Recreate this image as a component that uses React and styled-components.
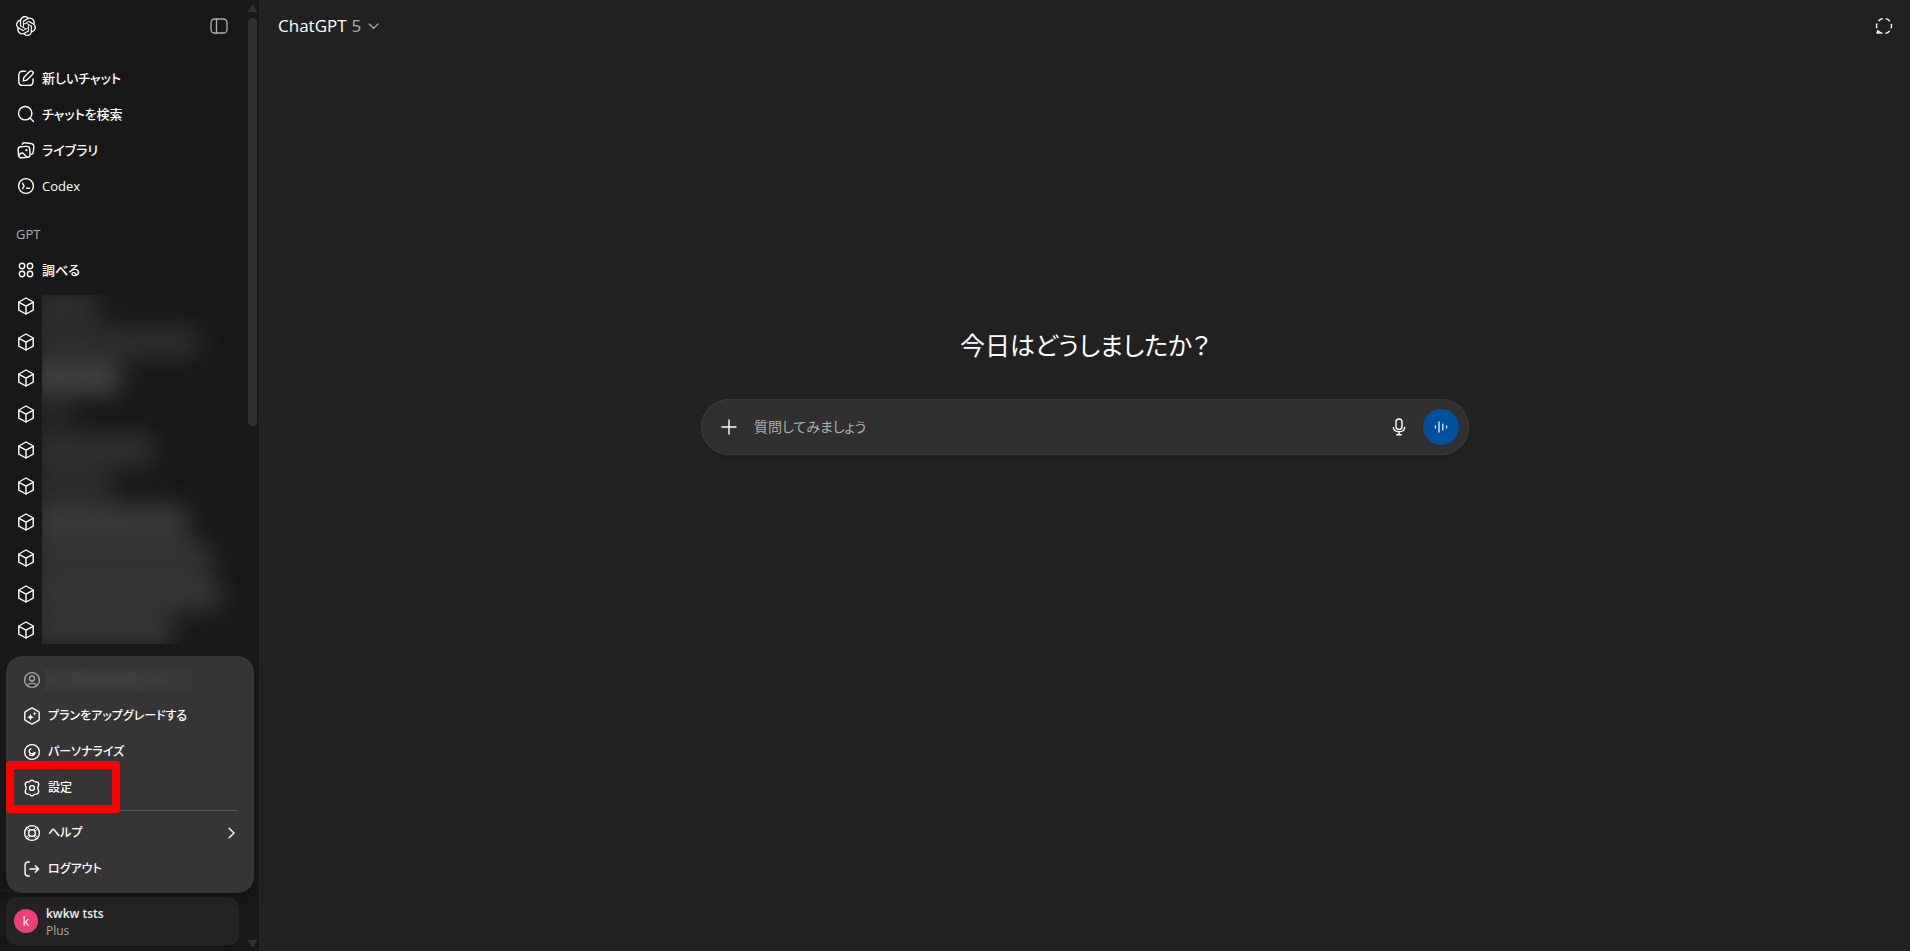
import React from 'react';
import styled, {createGlobalStyle} from 'styled-components';
import {SiOpenai} from 'react-icons/si';



const GlobalStyle = createGlobalStyle`
    * {
        box-sizing: border-box;
    }
    body {
        margin: 0;
        background: #212121;
        color: #fff;
        font-family: "Open Sans", "Noto Sans CJK JP", sans-serif;
        font-feature-settings: "palt";
        font-size: 13px;
    }
    button, input {
        font: inherit;
        font-feature-settings: inherit;
        color: inherit;
    }
    button {
        padding: 0;
        border: 0;
        background: none;
        cursor: pointer;
    }
`
const Page = styled.div`
    display: flex;
    height: 100vh;
`
const Sidebar = styled.aside`
    display: flex;
    flex: none;
    width: 260px;
    background: #181818;
    border-right: 1px solid #252525;
`
const Body = styled.div`
    display: flex;
    flex-direction: column;
    flex: 1;
    min-width: 0;
`
const SideHead = styled.div`
    display: flex;
    flex: none;
    align-items: center;
    justify-content: space-between;
    height: 52px;
    padding: 0 8px 0 16px;
    margin-bottom: 8px;
`
const IconButton = styled.button`
    display: flex;
    flex: none;
    align-items: center;
    justify-content: center;
    width: 36px;
    height: 36px;
    border-radius: 50%;
    color: ${p => p.$color || '#fff'};
    background: ${p => p.$bg || 'none'};
`
const Scrollable = styled.div`
    flex: 1;
    min-height: 0;
    overflow: hidden;
`
const Row = styled.button`
    position: relative;
    display: flex;
    align-items: center;
    gap: 6px;
    width: 100%;
    height: 36px;
    padding: 0 10px;
    border-radius: 10px;
    text-align: left;
    font-weight: 500;
    white-space: nowrap;
    color: ${p => p.$muted ? '#a5a5a5' : '#fff'};
    & > svg {
        flex: none;
    }
`
const Text = styled.span`
    display: block;
    height: 20px;
    line-height: 20px;
`
const Nav = styled.nav`
    padding: 0 6px;
`
const Label = styled.h2`
    margin: 12px 0 0;
    padding-left: 10px;
    line-height: 36px;
    font-size: 13px;
    font-weight: 400;
    color: #afafaf;
`
const GptList = styled.div`
    display: grid;
    grid-template-columns: 36px 1fr;
`
const Hidden = styled.div`
    height: 349px;
    margin-top: 7px;
    overflow: hidden;
`
const Smudges = styled.div`
    margin: -7px 0 0 -10px;
    filter: blur(12px);
`
const Smudge = styled.div`
    height: 36px;
    border-top: 2px solid transparent;
    border-bottom: 2px solid transparent;
    background: ${p => p.$color};
    background-clip: padding-box;
`
const Footer = styled.div`
    position: relative;
    flex: none;
    padding: 6px;
    border-top: 1px solid #222;
`
const Account = styled.button`
    display: flex;
    align-items: center;
    gap: 8px;
    width: 100%;
    height: 48px;
    padding: 0 8px;
    border-radius: 10px;
    background: #242424;
    text-align: left;
`
const Avatar = styled.span`
    width: 24px;
    height: 24px;
    border-radius: 50%;
    background: #ec407a;
    line-height: 24px;
    text-align: center;
`
const Name = styled.span`
    display: block;
    padding-top: 2px;
    line-height: 18px;
    font-size: 12px;
    font-weight: 600;
    color: #f0f0f0;
`
const Plan = styled.span`
    display: block;
    line-height: 16px;
    font-size: 12px;
    color: #a5a5a5;
`
const Menu = styled.div`
    position: absolute;
    left: 6px;
    bottom: 58px;
    z-index: 2;
    width: 248px;
    padding: 6px;
    border-radius: 16px;
    background: #353535;
    box-shadow: 0 8px 12px rgba(0, 0, 0, 0.16), 0 0 1px rgba(0, 0, 0, 0.6);
    font-size: 12px;
`
const Blurred = styled.span`
    width: 146px;
    height: 24px;
    margin-left: -3px;
    background: radial-gradient(ellipse at 40% 50%, #404040, #383838 80%);
`
const Divider = styled.hr`
    height: 1px;
    margin: 4px 10px;
    border: 0;
    background: #555;
`
const Push = styled.span`
    display: flex;
    margin-left: auto;
`
const Highlight = styled.span`
    position: absolute;
    top: -9px;
    left: -6px;
    width: 114px;
    height: 52px;
    border: 8px solid #f00;
    border-radius: 3px;
`
const Scrollbar = styled.div`
    display: flex;
    flex-direction: column;
    flex: none;
    width: 14px;
    padding: 4px 2px 3px 3px;
    color: #303030;
    & > svg {
        flex: none;
    }
`
const Track = styled.div`
    flex: 1;
    margin: 5px 0;
`
const Thumb = styled.div`
    height: 44.5%;
    border-radius: 5px;
    background: #303030;
`
const Main = styled.main`
    display: flex;
    flex-direction: column;
    flex: 1;
    min-width: 0;
`
const TopBar = styled.header`
    display: flex;
    align-items: center;
    justify-content: space-between;
    height: 52px;
    padding: 0 8px 0 18px;
`
const Model = styled.button`
    display: flex;
    align-items: center;
    gap: 5px;
    font-size: 17px;
    line-height: 28px;
    & > span, & > svg {
        color: #afafaf;
    }
`
const Center = styled.div`
    display: flex;
    flex-direction: column;
    align-items: center;
    gap: 36px;
    padding: 275px 24px 0;
`
const Title = styled.h1`
    margin: 0;
    line-height: 36px;
    font-size: 25px;
    font-weight: 400;
`
const Composer = styled.form`
    display: flex;
    align-items: center;
    gap: 6px;
    width: 100%;
    max-width: 768px;
    height: 56px;
    padding: 0 10px;
    border-radius: 28px;
    background: #303030;
    box-shadow: inset 0 0 1px rgba(255, 255, 255, 0.3), 0 4px 4px rgba(0, 0, 0, 0.06);
`
const Question = styled.input`
    flex: 1;
    min-width: 0;
    padding: 0 1px;
    border: 0;
    outline: 0;
    background: none;
    font-size: 14px;
    line-height: 24px;
    &::placeholder {
        color: #afafaf;
        opacity: 1;
    }
`

const Icon = ({children, size = 20, width = 1.4}) => (
    <svg width={size} height={size} viewBox="0 0 20 20" fill="none" stroke="currentColor"
        strokeWidth={width} strokeLinecap="round" strokeLinejoin="round" aria-hidden="true">
        {children}
    </svg>
)

const icons = {
    panel: <><rect x="2" y="3" width="16" height="14" rx="3.5"/><path d="M7.5 3v14"/></>,
    edit: <>
        <path d="M9.500 3.200H6.800C4.100 3.200 2.800 4.500 2.800 7.200v6.200c0 2.700 1.300 4 4 4h6.200c2.700 0 4-1.300 4-4V11"/>
        <path d="M7.300 12.800l.4-2.700c.1-.5.3-.9.6-1.200l5.300-5.300a1.950 1.950 0 0 1 2.900 2.900l-5.300 5.300c-.3.300-.7.500-1.200.6z"/>
    </>,
    search: <><circle cx="9.200" cy="9.200" r="6.700"/><path d="M14 14l3.500 3.500"/></>,
    library: <>
        <rect x="2.300" y="6.600" width="11.600" height="11" rx="2.800" transform="rotate(-4 8 12)"/>
        <path d="M6.300 4.200c.3-1 1.100-1.500 2.200-1.400l6.300.7c2.200.3 3.200 1.500 3 3.600l-.5 4.700c-.2 1.300-.8 2.100-1.900 2.500"/>
        <path d="M3 15.300c1.500-2.800 3.500-2.900 5.200-1.100 1 1.100 1.800 2.100 3 2.900"/>
        <circle cx="10.400" cy="10.200" r="1.100" fill="currentColor" stroke="none"/>
    </>,
    codex: <><circle cx="10" cy="10" r="7.400"/><path d="M6.700 7.300c.3 1.400.8 2.100 1.500 2.700-.7.600-1.200 1.300-1.500 2.700M10.600 12.200h3"/></>,
    explore: <>
        <circle cx="6" cy="6" r="2.700"/><circle cx="14" cy="6" r="2.700"/>
        <circle cx="6" cy="14" r="2.700"/><circle cx="14" cy="14" r="2.700"/>
    </>,
    cube: <>
        <path d="M10 2l7.200 4v8.200L10 18l-7.200-3.800V6z"/>
        <path d="M3 6.300l7 3.900 7-3.900M10 10.200V18"/>
    </>,
    user: <><circle cx="10" cy="10" r="7.400"/><circle cx="10" cy="8.500" r="2.500"/><path d="M5.200 15.400c2.400-3 7.200-3 9.600 0"/></>,
    upgrade: <>
        <path d="M9.100 2.300q.9-.5 1.800 0l5.400 3q.9.500.9 1.500v6.400q0 1-.9 1.500l-5.400 3q-.9.500-1.800 0l-5.400-3q-.9-.5-.9-1.500V6.800q0-1 .9-1.500z"/>
        <path d="M8.500 7.600c.5 2.500 1 3.100 3.600 3.600-2.600.5-3.100 1.100-3.600 3.600-.5-2.500-1-3.100-3.600-3.600 2.600-.5 3.100-1.100 3.600-3.600zM12.600 5.300c.3 1.600.7 2 2.200 2.300-1.500.3-1.900.7-2.200 2.300-.3-1.600-.7-2-2.200-2.300 1.500-.3 1.900-.7 2.200-2.300z" fill="currentColor" stroke="none"/>
    </>,
    personalize: <><circle cx="10" cy="10" r="7.400"/><path d="M8.900 6.800c-2 .8-2.300 3-.8 4.300M7.500 12.800c2.500 1.600 5.200.2 5.500-2.400-1.500 1.500-3.300 1.700-4.900.7"/></>,
    settings: <>
        <path d="M8.700 2.700c.8-.5 1.800-.5 2.600 0l1 .8c.4.300.8.400 1.300.4l1.100.1c1 .1 1.700.7 2 1.600.2.600.1 1.300-.2 1.900l-.5 1.200c-.2.800-.2 1.800 0 2.600l.5 1.200c.6 1.700-.2 3.300-1.900 3.500l-1.100.1c-.5 0-.9.100-1.300.4l-1 .8c-.8.500-1.700.5-2.500 0l-1-.8c-.4-.3-.8-.4-1.300-.4l-1.100-.1c-1.700-.2-2.500-1.800-1.900-3.500l.5-1.200c.2-.8.2-1.800 0-2.600l-.5-1.200C2.800 5.800 3.600 4.200 5.300 4l1.100-.1c.5 0 .9-.1 1.300-.4z"/>
        <circle cx="10" cy="10" r="2.400"/>
    </>,
    help: <>
        <circle cx="10" cy="10" r="7.400"/><circle cx="10" cy="10" r="3.300"/>
        <path d="M5.300 3.900l2.800 3M3.900 5.300l3 2.800M14.700 3.900l-2.800 3M16.100 5.300l-3 2.800M5.300 16.100l2.800-3M3.900 14.700l3-2.800M14.700 16.100l-2.800-3M16.100 14.700l-3-2.800" strokeWidth="1"/>
    </>,
    logout: <><path d="M7.300 3H6.200C4.200 3 3.100 4.100 3.100 6.100v7.800c0 2 1.100 3.100 3.100 3.100h1.100M7.800 10h8.800M13.300 6.700l3.300 3.300-3.300 3.300"/></>,
    right: <path d="M9 4l6 6-6 6"/>,
    down: <path d="M4 7.500l5.500 5.500L15 7.500"/>,
    temp: <>
        <circle cx="10" cy="10" r="7.500" strokeDasharray="4.850 3" strokeDashoffset="2.420" strokeLinecap="butt"/>
        <path d="M4 14.600l-1 2.500 3.800-.4"/>
    </>,
    plus: <path d="M10 3v14M3 10h14"/>,
    mic: <><rect x="7" y="2" width="6" height="10.500" rx="3"/><path d="M4.300 10.500c.9 5.700 10.500 5.700 11.400 0M10 14.800v2.700M7.700 17.700h4.600"/></>,
    voice: <path d="M3.800 8.800v2.400M7.800 4.500v11M12 6.800v6.400M16.200 8.800v2.400"/>
}

const links = [
    {icon: 'edit', text: '新しいチャット'},
    {icon: 'search', text: 'チャットを検索'},
    {icon: 'library', text: 'ライブラリ'},
    {icon: 'codex', text: 'Codex'}
]

const gpts = [
    {width: 66, color: '#2f2f2f'},
    {width: 165, color: '#2d2e2e'},
    {width: 88, color: '#444442'},
    {width: 40, color: '#242526'},
    {width: 120, color: '#313131'},
    {width: 80, color: '#2c2d2d'},
    {width: 155, color: '#3d3d3d'},
    {width: 178, color: '#363636'},
    {width: 188, color: '#383838'},
    {width: 140, color: '#383836'}
]

const Item = ({icon, text, children}) => (
    <Row type="button">
        <Icon>{icons[icon]}</Icon>
        <Text>{text}</Text>
        {children}
    </Row>
)

const AccountMenu = () => (
    <Menu>
        <Row type="button" $muted>
            <Icon>{icons.user}</Icon>
            <Blurred/>
        </Row>
        <Item icon="upgrade" text="プランをアップグレードする"/>
        <Item icon="personalize" text="パーソナライズ"/>
        <Item icon="settings" text="設定"><Highlight/></Item>
        <Divider/>
        <Item icon="help" text="ヘルプ">
            <Push><Icon size={16} width={1.8}>{icons.right}</Icon></Push>
        </Item>
        <Item icon="logout" text="ログアウト"/>
    </Menu>
)

const App = () => {
    return (
        <Page>
            <GlobalStyle/>
            <Sidebar>
                <Body>
                    <SideHead>
                        <SiOpenai size={20}/>
                        <IconButton type="button" $color="#afafaf"><Icon width={1.3}>{icons.panel}</Icon></IconButton>
                    </SideHead>
                    <Scrollable>
                        <Nav>
                            {links.map(l => <Item key={l.text} icon={l.icon} text={l.text}/>)}
                            <Label>GPT</Label>
                            <Item icon="explore" text="調べる"/>
                            <GptList>
                                <div>
                                    {gpts.map((g, i) => <Row key={i} type="button"><Icon>{icons.cube}</Icon></Row>)}
                                </div>
                                <Hidden>
                                    <Smudges>
                                        {gpts.map((g, i) => <Smudge key={i} $color={g.color} style={{width: g.width}}/>)}
                                    </Smudges>
                                </Hidden>
                            </GptList>
                        </Nav>
                    </Scrollable>
                    <Footer>
                        <AccountMenu/>
                        <Account type="button">
                            <Avatar>k</Avatar>
                            <span>
                                <Name>kwkw tsts</Name>
                                <Plan>Plus</Plan>
                            </span>
                        </Account>
                    </Footer>
                </Body>
                <Scrollbar>
                    <svg width="9" height="9" viewBox="0 0 9 9" fill="currentColor"><path d="M3.500 1.500q1-1.300 2 0L9 7v1H0V7z"/></svg>
                    <Track><Thumb/></Track>
                    <svg width="9" height="9" viewBox="0 0 9 9" fill="currentColor"><path d="M3.500 7.500q1 1.300 2 0L9 2V1H0v1z"/></svg>
                </Scrollbar>
            </Sidebar>
            <Main>
                <TopBar>
                    <Model type="button">
                        ChatGPT <span>5</span>
                        <Icon size={16} width={1.5}>{icons.down}</Icon>
                    </Model>
                    <IconButton type="button"><Icon>{icons.temp}</Icon></IconButton>
                </TopBar>
                <Center>
                    <Title>今日はどうしましたか？</Title>
                    <Composer>
                        <IconButton type="button"><Icon>{icons.plus}</Icon></IconButton>
                        <Question type="text" aria-label="質問してみましょう" placeholder="質問してみましょう"/>
                        <IconButton type="button"><Icon>{icons.mic}</Icon></IconButton>
                        <IconButton type="button" $bg="#00509b" $color="#cfe3f7"><Icon size={18} width={1.6}>{icons.voice}</Icon></IconButton>
                    </Composer>
                </Center>
            </Main>
        </Page>
    )
}

export default App
